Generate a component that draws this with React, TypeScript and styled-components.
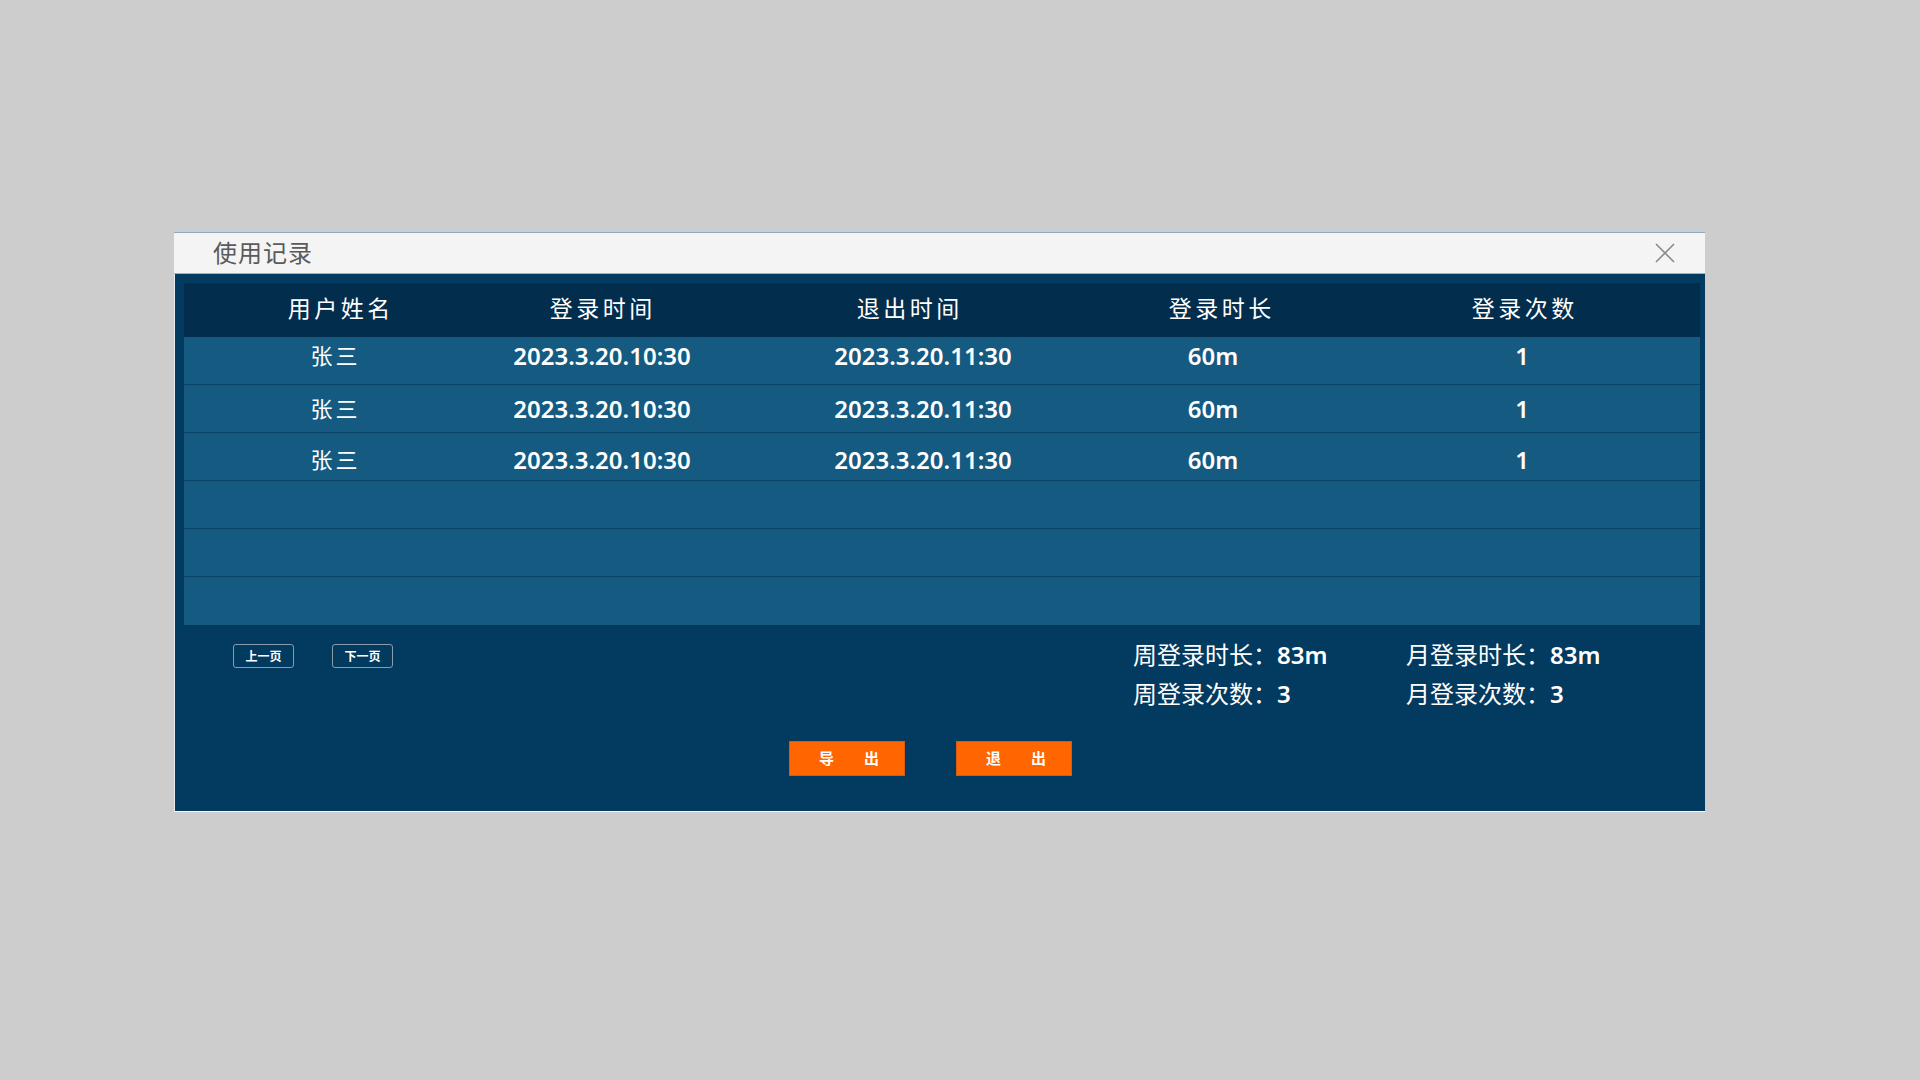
import styled, { createGlobalStyle } from "styled-components";

const FONT = `"Noto Sans", "Noto Sans CJK SC", sans-serif`;

const GlobalStyle = createGlobalStyle`
  html, body {
    margin: 0;
    padding: 0;
    background: #cdcdcd;
    font-family: ${FONT};
  }
`;

// header and body columns are not quite aligned in the original
const HEAD_COLS = "310px 214px 400px 224px 382px";
const ROW_COLS = "300px 236px 406px 174px 444px";

const columns = ["用户姓名", "登录时间", "退出时间", "登录时长", "登录次数"];

type Rec = { name: string; login: string; logout: string; duration: string; count: string; nudge: number };

const records: (Rec | null)[] = [
  { name: "张三", login: "2023.3.20.10:30", logout: "2023.3.20.11:30", duration: "60m", count: "1", nudge: -5 },
  { name: "张三", login: "2023.3.20.10:30", logout: "2023.3.20.11:30", duration: "60m", count: "1", nudge: 0 },
  { name: "张三", login: "2023.3.20.10:30", logout: "2023.3.20.11:30", duration: "60m", count: "1", nudge: 3 },
  null,
  null,
  null,
];

export default function App() {
  return (
    <Page>
      <GlobalStyle />
      <Dialog>
        <TitleBar>
          <Title>使用记录</Title>
          <CloseButton aria-label="close">
            <svg width="20" height="20" viewBox="0 0 20 20">
              <path d="M1 1 L19 19 M19 1 L1 19" stroke="#8a8a8a" strokeWidth="1.6" fill="none" />
            </svg>
          </CloseButton>
        </TitleBar>
        <Body>
          <Table>
            <HeadRow $cols={HEAD_COLS}>
              {columns.map((c) => (
                <HeadCell key={c}>{c}</HeadCell>
              ))}
            </HeadRow>
            {records.map((r, i) => (
              <Row key={i} $cols={ROW_COLS} $nudge={r ? r.nudge : 0} $last={i === records.length - 1}>
                {r && (
                  <>
                    <Cell $cjk>{r.name}</Cell>
                    <Cell>{r.login}</Cell>
                    <Cell>{r.logout}</Cell>
                    <Cell>{r.duration}</Cell>
                    <Cell>{r.count}</Cell>
                  </>
                )}
              </Row>
            ))}
          </Table>

          <Footer>
            <Pager>
              <PageButton>上一页</PageButton>
              <PageButton>下一页</PageButton>
            </Pager>
            <Stats>
              <Stat>
                周登录时长：<b>83m</b>
              </Stat>
              <Stat>
                月登录时长：<b>83m</b>
              </Stat>
              <Stat>
                周登录次数：<b>3</b>
              </Stat>
              <Stat>
                月登录次数：<b>3</b>
              </Stat>
            </Stats>
          </Footer>

          <Actions>
            <ActionButton>导　　出</ActionButton>
            <ActionButton>退　　出</ActionButton>
          </Actions>
        </Body>
      </Dialog>
    </Page>
  );
}

const Page = styled.div`
  min-height: 1080px;
  box-sizing: border-box;
  padding: 232px 0 0 174px;
`;

const Dialog = styled.div`
  width: 1531px;
  display: flex;
  flex-direction: column;
`;

const TitleBar = styled.div`
  height: 40px;
  display: flex;
  align-items: center;
  justify-content: space-between;
  padding: 0 30px 0 39px;
  background: #f4f4f4;
  border-top: 1px solid #8fa9bf;
  border-bottom: 1px solid #9fb2c2;
`;

const Title = styled.div`
  font-size: 24px;
  letter-spacing: 1px;
  color: #5a5a5a;
  line-height: 40px;
`;

const CloseButton = styled.button`
  width: 20px;
  height: 20px;
  padding: 0;
  border: none;
  background: none;
  display: flex;
  cursor: pointer;
`;

const Body = styled.div`
  background: #033a5f;
  border-left: 1px solid #e6edf2;
  border-bottom: 1px solid #f4f8fa;
  padding: 9px 5px 35px 9px;
`;

const Table = styled.div`
  display: flex;
  flex-direction: column;
  overflow: hidden;
`;

const HeadRow = styled.div<{ $cols: string }>`
  display: grid;
  grid-template-columns: ${(p) => p.$cols};
  height: 54px;
  box-sizing: border-box;
  padding-bottom: 6px;
  align-items: center;
  background: #032d4d;
`;

const HeadCell = styled.div`
  text-align: center;
  color: #ffffff;
  font-size: 23px;
  letter-spacing: 3.5px;
  padding-left: 3.5px;
`;

const Row = styled.div<{ $cols: string; $nudge: number; $last?: boolean }>`
  display: grid;
  grid-template-columns: ${(p) => p.$cols};
  height: 48px;
  box-sizing: border-box;
  padding-top: ${(p) => Math.max(0, p.$nudge * 2)}px;
  padding-bottom: ${(p) => Math.max(0, -p.$nudge * 2)}px;
  align-items: center;
  background: #155a80;
  border-bottom: ${(p) => (p.$last ? "none" : "1px solid #0b4366")};
`;

const Cell = styled.div<{ $cjk?: boolean }>`
  text-align: center;
  color: #ffffff;
  font-size: ${(p) => (p.$cjk ? "22px" : "24px")};
  font-weight: ${(p) => (p.$cjk ? 400 : 600)};
  letter-spacing: ${(p) => (p.$cjk ? "3px" : "0")};
  padding-left: ${(p) => (p.$cjk ? "3px" : "0")};
  padding-bottom: ${(p) => (p.$cjk ? "3px" : "0")};
`;

const Footer = styled.div`
  display: grid;
  grid-template-columns: 949px auto;
  align-items: start;
`;

const Pager = styled.div`
  display: flex;
  gap: 38px;
  padding: 19px 0 0 49px;
`;

const PageButton = styled.button`
  width: 61px;
  height: 24px;
  padding: 0;
  border: 1px solid #8c9baa;
  border-radius: 3px;
  background: transparent;
  color: #ffffff;
  font-family: ${FONT};
  font-size: 12px;
  font-weight: 700;
  cursor: pointer;
`;

const Stats = styled.div`
  display: grid;
  grid-template-columns: 273px auto;
  padding-top: 10px;
`;

const Stat = styled.div`
  font-size: 24px;
  line-height: 39px;
  color: #ffffff;

  b {
    font-weight: 600;
  }
`;

const Actions = styled.div`
  display: flex;
  justify-content: center;
  gap: 51px;
  padding-right: 23px;
  margin-top: 28px;
`;

const ActionButton = styled.button`
  width: 116px;
  height: 35px;
  padding: 0 0 3px 4px;
  border: 1px solid #d85a12;
  background: #ff6600;
  color: #ffffff;
  font-family: ${FONT};
  font-size: 15px;
  font-weight: 700;
  cursor: pointer;
`;
